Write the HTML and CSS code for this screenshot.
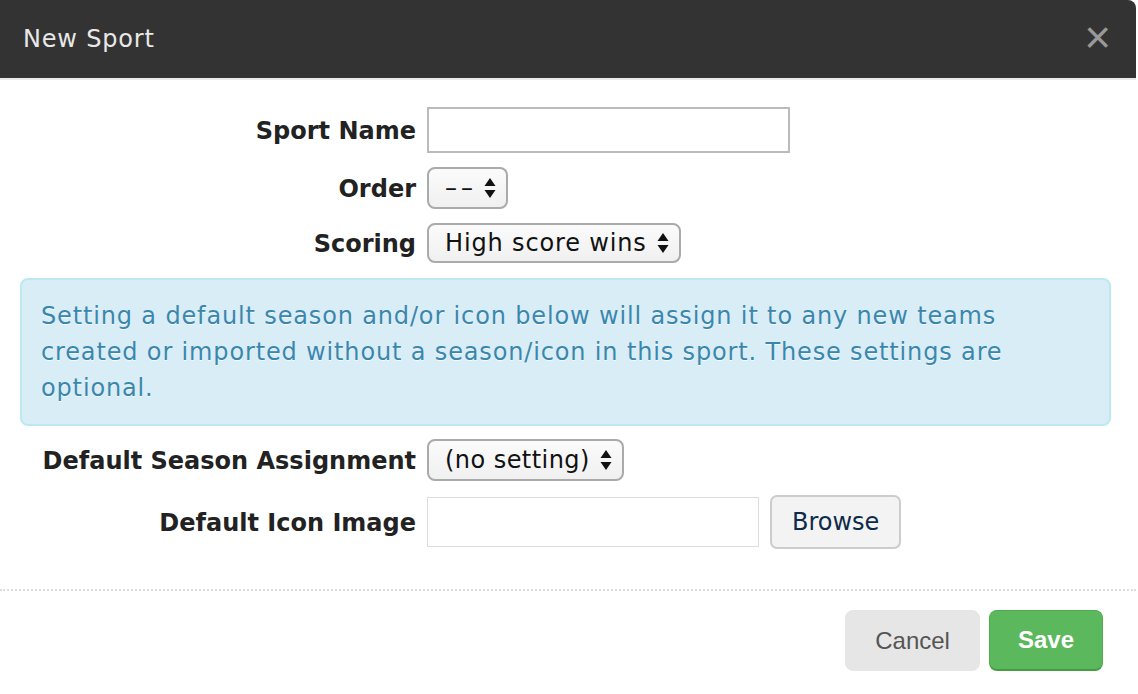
FILE: index.html
```html
<!DOCTYPE html>
<html lang="en">
<head>
    <meta charset="UTF-8">
    <title>New Sport</title>
    <link rel="stylesheet" href="styles.css">
</head>
<body>
    <div class="modal">
        <div class="modal-header">
            <h3>New Sport</h3>
            <span class="close">&times;</span>
        </div>
        <div class="modal-body">
            <div class="row row-name">
                <label>Sport Name</label>
                <input type="text" class="text-input">
            </div>
            <div class="row row-order">
                <label>Order</label>
                <div class="select-box">
                    <span class="dashes">&ndash;&ndash;</span>
                    <svg class="arrows" width="12" height="22" viewBox="0 0 12 22"><path d="M6 1 L11.5 9 L0.5 9 Z M0.5 13 L11.5 13 L6 21 Z" fill="#111"/></svg>
                </div>
            </div>
            <div class="row row-scoring">
                <label>Scoring</label>
                <div class="select-box">
                    <span>High score wins</span>
                    <svg class="arrows" width="12" height="22" viewBox="0 0 12 22"><path d="M6 1 L11.5 9 L0.5 9 Z M0.5 13 L11.5 13 L6 21 Z" fill="#111"/></svg>
                </div>
            </div>
            <div class="alert-info">
                Setting a default season and/or icon below will assign it to any new teams created or imported without a season/icon in this sport. These settings are optional.
            </div>
            <div class="row row-season">
                <label>Default Season Assignment</label>
                <div class="select-box">
                    <span>(no setting)</span>
                    <svg class="arrows" width="12" height="22" viewBox="0 0 12 22"><path d="M6 1 L11.5 9 L0.5 9 Z M0.5 13 L11.5 13 L6 21 Z" fill="#111"/></svg>
                </div>
            </div>
            <div class="row row-icon">
                <label>Default Icon Image</label>
                <input type="text" class="file-input">
                <button class="browse">Browse</button>
            </div>
        </div>
        <div class="modal-footer">
            <button class="btn btn-cancel">Cancel</button>
            <button class="btn btn-save">Save</button>
        </div>
    </div>
</body>
</html>
```

FILE: styles.css
```css
body {
    margin: 0;
    padding: 0;
    background: #fff;
    font-family: "DejaVu Sans", Verdana, sans-serif;
    color: #222;
}
.modal {
    width: 1136px;
    height: 694px;
    background: #fff;
    border-top-right-radius: 8px;
    overflow: hidden;
}
.modal-header {
    height: 80px;
    background: #333;
    border-bottom: 2px solid #e9e9e9;
    display: flex;
    align-items: center;
    justify-content: space-between;
    padding: 0 25px 0 23px;
    box-sizing: border-box;
}
.modal-header h3 {
    margin: 0;
    color: #e8e8e8;
    font-size: 24px;
    font-weight: normal;
    letter-spacing: 0.8px;
}
.close {
    color: #999;
    font-size: 46px;
    line-height: 1;
    font-family: "Liberation Sans", Arial, sans-serif;
    margin-top: -4px;
}
.modal-body {
    padding: 27px 25px 40px 20px;
    border-bottom: 2px dotted #ddd;
}
.row {
    display: flex;
    align-items: center;
    gap: 11px;
    margin-bottom: 14px;
}
.row label {
    width: 396px;
    text-align: right;
    font-weight: bold;
    font-size: 24px;
    color: #222;
    padding-top: 2px;
}
.text-input {
    width: 363px;
    height: 46px;
    box-sizing: border-box;
    border: 2px solid #bbb;
    font-size: 22px;
    padding: 0 8px;
}
.select-box {
    display: flex;
    align-items: center;
    gap: 10px;
    height: 42px;
    box-sizing: border-box;
    padding: 0 10px 0 16px;
    border: 2px solid #aaa;
    border-radius: 8px;
    background: linear-gradient(#fbfbfb, #f0f0f0);
    font-size: 24px;
    letter-spacing: 0.85px;
    color: #111;
}
.dashes {
    letter-spacing: 4px;
    margin-right: -3px;
}
.row-scoring .select-box {
    height: 40px;
}
.row-scoring {
    margin-bottom: 15px;
}
.row-season .select-box {
    letter-spacing: 0.45px;
}
.alert-info {
    background: #d9edf7;
    border: 2px solid #bce8f1;
    border-radius: 8px;
    color: #3a87ad;
    text-shadow: 0 1px 0 rgba(255, 255, 255, 0.7);
    font-size: 24px;
    letter-spacing: 0.85px;
    line-height: 36px;
    padding: 18px 100px 18px 19px;
    margin-bottom: 13px;
}
.file-input {
    width: 332px;
    height: 50px;
    box-sizing: border-box;
    border: 1px solid #ddd;
}
.browse {
    height: 54px;
    padding: 0 20px;
    border: 2px solid #ccc;
    border-radius: 7px;
    background: #f3f3f3;
    color: #0d2b4a;
    font-family: "DejaVu Sans", Verdana, sans-serif;
    font-size: 24px;
}
.row-icon {
    margin-bottom: 0;
}
.modal-footer {
    display: flex;
    justify-content: flex-end;
    gap: 9px;
    padding: 19px 33px 0 0;
}
.btn {
    height: 61px;
    border-radius: 8px;
    font-family: "Liberation Sans", Arial, sans-serif;
    font-size: 24px;
    padding: 0 29px;
}
.btn-cancel {
    background: #e6e6e6;
    border: 1px solid #e6e6e6;
    color: #555;
}
.btn-save {
    background: #5cb85c;
    border: 1px solid #4cae4c;
    border-bottom: 2px solid #449d44;
    color: #fff;
    font-weight: bold;
    padding: 0 28px;
}
```
